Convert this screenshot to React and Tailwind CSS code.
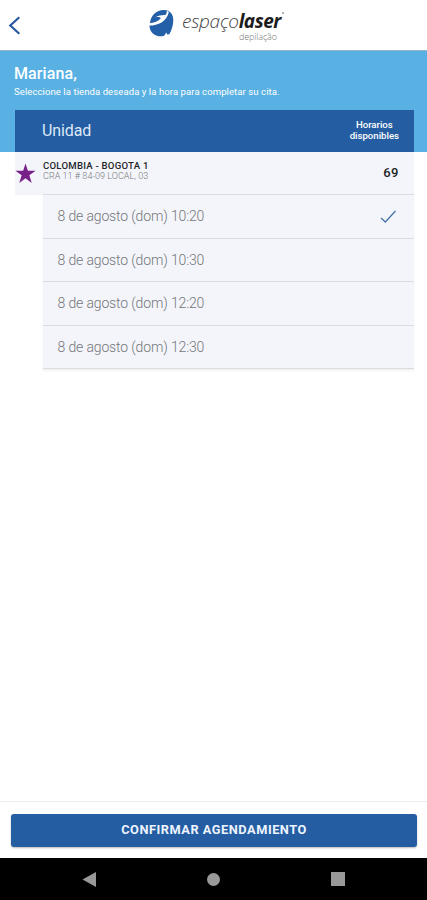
const slots = [
  { label: "8 de agosto (dom) 10:20", selected: true, height: "h-[44px]" },
  { label: "8 de agosto (dom) 10:30", selected: false, height: "h-[43px]" },
  { label: "8 de agosto (dom) 12:20", selected: false, height: "h-[44px]" },
  { label: "8 de agosto (dom) 12:30", selected: false, height: "h-[43px]" },
];

function LogoMark() {
  return (
    <svg className="h-[40px] w-[34px]" viewBox="0 0 34 40" aria-hidden="true">
      <path
        d="M2 18C2.500 10.500 8.500 5.200 15.500 4.900 22 4.700 25.500 9 25.300 15.500 25.200 20.500 23.500 25.500 21.300 29.200L19.300 29.500 18.300 27.500 16.200 30.800C9 33 1.700 28.500 1.500 21Z"
        fill="#2460a8"
      />
      <path
        d="M1 20.600C10.500 20.500 18.500 16.500 20.800 7.200 20.300 6.300 19.500 6 18.800 6.100 19 7.500 18.400 8.800 17.500 10 14.800 9.700 10.500 10.400 7.500 12.200 10.500 11.700 12.300 12 12.800 13.200 10.500 16 6 17.700 1.300 18.300Z"
        fill="#fff"
      />
    </svg>
  );
}

function Logo() {
  return (
    <div className="flex" role="img" aria-label="espaçolaser depilação">
      <LogoMark />
      <div className="flex flex-col font-['Open_Sans',sans-serif]">
        <div className="flex h-[27px] pt-[6px] text-[19px] leading-[20px] whitespace-nowrap">
          <span className="font-light tracking-[-0.25px] text-[#444] italic">espaço</span>
          <span className="font-bold tracking-[-0.5px] text-[#1c1c1c] italic">laser</span>
          <span className="mt-[1px] ml-[1px] size-[2px] rounded-full bg-[#999]" />
        </div>
        <span className="pl-[57px] text-[9px] leading-[9px] font-light tracking-[-0.1px] text-[#777]">
          depilação
        </span>
      </div>
    </div>
  );
}

function Header() {
  return (
    <header className="flex h-[51px] shrink-0 border-b border-[#8eb6cd] bg-white">
      <button aria-label="Volver" className="flex w-[148px] pt-[16px] pl-[8px]">
        <svg width="14" height="20" viewBox="0 0 14 20" fill="none" stroke="#2858a0" strokeWidth="2.200">
          <path d="M11.300 1.200 2.300 9.500l9 8.300" />
        </svg>
      </button>
      <div className="pt-[5px]">
        <Logo />
      </div>
    </header>
  );
}

function Slot({ label, selected, height }) {
  return (
    <li
      className={`${height} flex items-center justify-between border-b border-[#dadce0] bg-[#f3f5fa] pr-[17px] pl-[14.500px] text-[14px] font-light text-[#757679]`}
    >
      <span className="tracking-[-0.140px] whitespace-nowrap">{label}</span>
      {selected && (
        <svg width="17" height="14" viewBox="0 0 17 14" fill="none" stroke="#4774aa" strokeWidth="1.3">
          <path d="M1 8 5.300 12 15.500 1" />
        </svg>
      )}
    </li>
  );
}

export default function App() {
  return (
    <div className="flex h-[900px] w-[427px] flex-col overflow-hidden bg-white font-[Roboto,sans-serif]">
      <Header />

      <section className="h-[101px] shrink-0 bg-[#58b0e3] px-[14px] text-white">
        <div className="h-[59px] pt-[13px]">
          <h1 className="text-[16px] leading-[20px] font-medium tracking-[0.1px]">Mariana,</h1>
          <p className="pt-[2px] text-[9.600px] leading-[12px] tracking-[0.05px] whitespace-nowrap">
            Seleccione la tienda deseada y la hora para completar su cita.
          </p>
        </div>
        <div className="ml-px flex h-[42px] w-[399px] items-center justify-between bg-[#245da2] pr-[15px] pl-[27px]">
          <span className="text-[16px] tracking-[-0.1px] text-[#dce9f7]">Unidad</span>
          <span className="pb-[3px] text-center text-[9.600px] leading-[11px] font-medium">
            Horarios
            <br />
            disponibles
          </span>
        </div>
      </section>

      <main className="flex-1 pl-[15px]">
        <div className="flex h-[43px] w-[399px] bg-[#f3f5fa]">
          <div className="w-[28px] pt-[11px]">
            <svg width="21" height="21" viewBox="0 0 24 24" fill="#772088">
              <path d="m12 .5 2.700 8.300H23.500l-7.100 5.200 2.700 8.800L12 17.400l-7.100 5.400L7.600 14 .5 8.800h8.800Z" />
            </svg>
          </div>
          <div className="flex flex-1 justify-between border-b border-[#dadce0] pr-[15px]">
            <div className="pt-[8px] whitespace-nowrap">
              <p className="text-[9.600px] leading-[11px] font-medium tracking-[0.23px] text-[#242528]">
                COLOMBIA - BOGOTA 1
              </p>
              <p className="text-[9px] leading-[11px] font-light tracking-[0.04px] text-[#77797d]">
                CRA 11 # 84-09 LOCAL, 03
              </p>
            </div>
            <span className="pt-[11px] text-[13px] leading-[20px] font-medium tracking-[0.5px] text-[#242528]">69</span>
          </div>
        </div>
        <ul className="ml-[28px] w-[371px] shadow-[0_2px_2px_#f3f3f3]">
          {slots.map((slot) => (
            <Slot key={slot.label} {...slot} />
          ))}
        </ul>
      </main>

      <footer className="h-[57px] shrink-0 border-t border-[#ececec] pt-[12px] pr-[10px] pl-[11px]">
        <button className="h-[33px] w-full rounded-[3px] bg-[#245da2] pb-[2px] text-[12.800px] font-bold tracking-[0.520px] text-[#edf4ff] shadow-[0_1px_2px_#bbb]">
          CONFIRMAR AGENDAMIENTO
        </button>
      </footer>

      <nav className="flex h-[42px] shrink-0 items-center justify-between bg-black pr-[82px] pl-[82px]">
        <svg width="14" height="15" viewBox="0 0 14 15" fill="#999">
          <path d="M14 0v15L.5 7.500Z" />
        </svg>
        <span className="size-[13px] rounded-full bg-[#999]" />
        <span className="size-[14px] bg-[#999]" />
      </nav>
    </div>
  );
}
